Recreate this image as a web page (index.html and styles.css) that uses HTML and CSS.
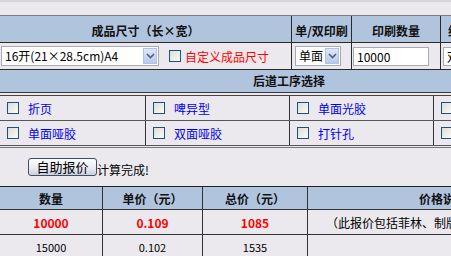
FILE: index.html
```html
<!DOCTYPE html>
<html lang="zh-CN">
<head>
<meta charset="utf-8">
<title>自助报价</title>
<link rel="stylesheet" href="styles.css">
</head>
<body>
<div class="page">
  <div class="top"></div>

  <div class="row hdr">
    <div class="cell c1">成品尺寸（长×宽）</div>
    <div class="cell c2">单/双印刷</div>
    <div class="cell c3">印刷数量</div>
    <div class="cell c4 hleft">纸张类型</div>
  </div>
  <div class="row inrow">
    <div class="cell c1 left">
      <div class="select sel-size"><span class="sel-text">16开(21×28.5cm)A4</span><span class="arrow"><svg viewBox="0 0 9 6" width="9" height="6"><path d="M1 1 L4.5 4.5 L8 1" fill="none" stroke="#4d6185" stroke-width="1.6"/></svg></span></div>
      <span class="cb"></span><span class="red">自定义成品尺寸</span>
    </div>
    <div class="cell c2 left">
      <div class="select sel-side"><span class="sel-text">单面</span><span class="arrow"><svg viewBox="0 0 9 6" width="9" height="6"><path d="M1 1 L4.5 4.5 L8 1" fill="none" stroke="#4d6185" stroke-width="1.6"/></svg></span></div>
    </div>
    <div class="cell c3 left">
      <div class="input qty">10000</div>
    </div>
    <div class="cell c4 left">
      <div class="input paper">双铜纸</div>
    </div>
  </div>

  <div class="band">后道工序选择</div>
  <div class="gap"></div>

  <div class="opts">
    <div class="orow">
      <div class="ocell o1"><span class="cb"></span><span class="blue">折页</span></div>
      <div class="ocell o2"><span class="cb"></span><span class="blue">啤异型</span></div>
      <div class="ocell o3"><span class="cb"></span><span class="blue">单面光胶</span></div>
      <div class="ocell o4"><span class="cb"></span><span class="blue">双面光胶</span></div>
    </div>
    <div class="orow">
      <div class="ocell o1"><span class="cb"></span><span class="blue">单面哑胶</span></div>
      <div class="ocell o2"><span class="cb"></span><span class="blue">双面哑胶</span></div>
      <div class="ocell o3"><span class="cb"></span><span class="blue">打针孔</span></div>
      <div class="ocell o4"><span class="cb"></span><span class="blue">烫金</span></div>
    </div>
  </div>
  <div class="dline"></div>

  <div class="action">
    <span class="btn">自助报价</span><span class="done">计算完成!</span>
  </div>

  <div class="res">
    <div class="rrow rhdr">
      <div class="rc r1">数量</div>
      <div class="rc r2">单价（元）</div>
      <div class="rc r3">总价（元）</div>
      <div class="rc r4">价格说明</div>
    </div>
    <div class="rrow hl">
      <div class="rc r1">10000</div>
      <div class="rc r2">0.109</div>
      <div class="rc r3">1085</div>
      <div class="rc r4 note">（此报价包括菲林、制版、印刷</div>
    </div>
    <div class="rrow">
      <div class="rc r1">15000</div>
      <div class="rc r2">0.102</div>
      <div class="rc r3">1535</div>
      <div class="rc r4"></div>
    </div>
  </div>
</div>
</body>
</html>
```

FILE: styles.css
```css
html, body {
  margin: 0;
  padding: 0;
  overflow: hidden;
}
body {
  background: #ebe9ed;
  font-family: "Noto Sans CJK SC", "Liberation Sans", sans-serif;
  font-size: 12px;
  color: #000;
}
.page {
  width: 578px;
}
.top {
  height: 13px;
  border-top: 2px solid #d6d4d9;
  border-bottom: 1px solid #7d7d80;
}
.row {
  display: flex;
  border-bottom: 1px solid #2a2a2a;
}
.cell {
  box-sizing: border-box;
  border-right: 1px solid #2a2a2a;
  display: flex;
  align-items: center;
  justify-content: center;
}
.hdr {
  height: 26px;
  background: #b0c4de;
  font-weight: bold;
  color: #111;
}
.hdr .cell { padding-top: 2px; }
.hdr .cell.hleft {
  justify-content: flex-start;
  padding-left: 7px;
}
.inrow {
  height: 26px;
}
.c1 { width: 292px; }
.c2 { width: 60px; }
.c3 { width: 89px; }
.c4 { width: 137px; border-right: 0; }
.left { justify-content: flex-start; }
.c1.left { padding-left: 1px; }
.c2.left { padding-left: 3px; }
.c3.left { padding-left: 1px; }
.c4.left { padding-left: 2px; }

.select {
  box-sizing: border-box;
  height: 20px;
  background: #fff;
  border: 1px solid #a5acb5;
  display: flex;
  align-items: center;
  justify-content: space-between;
  padding: 1px;
}
.sel-text {
  padding-left: 2px;
  font-size: 12px;
  line-height: 16px;
}
.sel-size { width: 158px; }
.sel-side { width: 46px; }
.arrow {
  box-sizing: border-box;
  width: 14px;
  height: 16px;
  background: linear-gradient(#dde7fb, #b7c9ec);
  border: 1px solid #b3c3e0;
  display: flex;
  align-items: center;
  justify-content: center;
}
.input {
  box-sizing: border-box;
  height: 19px;
  background: #fff;
  border: 1px solid #a5acb5;
  padding-left: 3px;
  line-height: 17px;
  font-size: 12px;
}
.qty { width: 76px; }
.paper { width: 90px; }

.cb {
  box-sizing: border-box;
  display: inline-block;
  width: 12px;
  height: 12px;
  border: 1px solid #1c5180;
  background: linear-gradient(135deg, #dcdcd7, #fbfbf9);
  flex: none;
}
.inrow .cb {
  margin-left: 10px;
  margin-right: 4px;
}
.red {
  color: #f00;
  font-size: 12px;
}

.band {
  height: 22px;
  line-height: 22px;
  background: #b0c4de;
  text-align: center;
  font-weight: bold;
  color: #111;
  border-bottom: 1px solid #3a3a3a;
}
.gap { height: 2px; }
.opts {
  border-top: 1px solid #444;
}
.orow {
  display: flex;
  height: 24px;
  border-bottom: 1px solid #555;
}
.ocell {
  box-sizing: border-box;
  border-right: 1px solid #333;
  display: flex;
  align-items: center;
  padding-left: 7px;
}
.ocell .cb { margin-right: 9px; }
.o1 { width: 146px; }
.o2 { width: 144px; }
.o3 { width: 144px; }
.o4 { width: 144px; border-right: 0; }
.blue { color: #0000ee; }
.dline {
  height: 0;
  margin-top: 1px;
  border-bottom: 1px solid #777;
}
.action {
  height: 38px;
  display: flex;
  align-items: flex-end;
  padding-left: 28px;
  box-sizing: border-box;
  padding-bottom: 10px;
}
.btn {
  box-sizing: border-box;
  width: 69px;
  height: 18px;
  border: 1px solid #3c4e6a;
  border-radius: 3px;
  background: linear-gradient(#ffffff, #e6e9f0 60%, #c9d0dd);
  text-align: center;
  font-size: 13px;
  line-height: 15px;
  color: #000;
}
.done {
  font-size: 12px;
  line-height: 13px;
}
.res {
  border-top: 1px solid #222;
}
.rrow {
  display: flex;
  height: 24px;
  border-bottom: 1px solid #333;
}
.rhdr {
  height: 22px;
  background: #b0c4de;
  font-weight: bold;
  color: #111;
}
.rc {
  box-sizing: border-box;
  border-right: 1px solid #333;
  display: flex;
  align-items: center;
  justify-content: center;
  font-size: 11px;
}
.rhdr .rc { font-size: 12px; }
.r1 { width: 103px; }
.r2 { width: 100px; }
.r3 { width: 105px; }
.r4 { width: 270px; border-right: 0; }
.hl .rc {
  color: #f00;
  font-weight: bold;
  font-size: 12px;
}
.hl .rc.note {
  color: #000;
  font-weight: normal;
  justify-content: flex-start;
  padding-left: 18px;
}
```
